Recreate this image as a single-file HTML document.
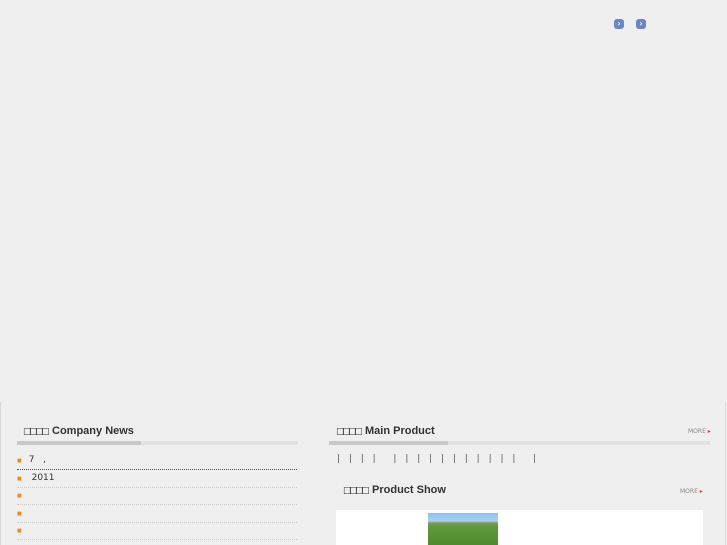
<!DOCTYPE html><html><head><style>
body{margin:0;width:727px;height:545px;background:#efefef;position:relative;overflow:hidden;font-family:"DejaVu Sans","Liberation Sans",sans-serif;color:#333}
.a{position:absolute}
.btn{width:10px;height:10px;background:#6a86c8;border-radius:3px;color:#fff;font-size:8px;line-height:10px;text-align:center;font-weight:bold}
.t{font-size:11px;font-weight:bold;color:#333;font-family:"Liberation Sans",sans-serif}
.t s{text-decoration:none;font-size:9px;font-weight:normal;letter-spacing:-2.5px;margin-right:5px;font-family:"DejaVu Sans",sans-serif}
.bar{height:4px;background:#e2e2e2}
.bar i{display:block;height:4px;background:#c8c8c8}
.li{left:17px;width:280px;height:17px;border-bottom:1px dotted #ccc;font-size:9px;color:#333;line-height:17px}
.li b{color:#f08a20;margin-right:7px;font-size:5px}
.more{font-size:6px;color:#888}
.more span{color:#e33}
</style></head><body>
<div class="a btn" style="left:614px;top:19px">›</div>
<div class="a btn" style="left:636px;top:19px">›</div>
<div class="a" style="left:0;top:402px;width:1px;height:143px;background:#d8d8d8"></div>
<div class="a" style="left:725px;top:402px;width:1px;height:143px;background:#dcdcdc"></div>
<div class="a t" style="left:23px;top:425px"><s>□□□□</s>Company News</div>
<div class="a bar" style="left:17px;top:441px;width:281px"><i style="width:124px"></i></div>
<div class="a li" style="top:452px;border-bottom:1px dotted #555"><b>■</b>7 &nbsp; ,</div>
<div class="a li" style="top:470px"><b>■</b>&nbsp;2011</div>
<div class="a li" style="top:487px"><b>■</b></div>
<div class="a li" style="top:505px"><b>■</b></div>
<div class="a li" style="top:522px"><b>■</b></div>
<div class="a t" style="left:336px;top:425px"><s>□□□□</s>Main Product</div>
<div class="a bar" style="left:329px;top:441px;width:381px"><i style="width:119px"></i></div>
<div class="a more" style="left:688px;top:428px">MORE <span>▸</span></div>
<div class="a" style="left:337px;top:454px;font-size:9px;color:#555;word-spacing:6px">| | | | &nbsp;| | | | | | | | | | | &nbsp;|</div>
<div class="a t" style="left:343px;top:484px"><s>□□□□</s>Product Show</div>
<div class="a more" style="left:680px;top:488px">MORE <span>▸</span></div>
<div class="a" style="left:336px;top:510px;width:367px;height:35px;background:#fff"></div>
<div class="a" style="left:428px;top:513px;width:70px;height:32px;background:linear-gradient(#8fc0ea 0,#a8d0f0 8px,#7a9a60 10px,#5f9a3a 14px,#4f8a30 100%)"></div>
</body></html>
